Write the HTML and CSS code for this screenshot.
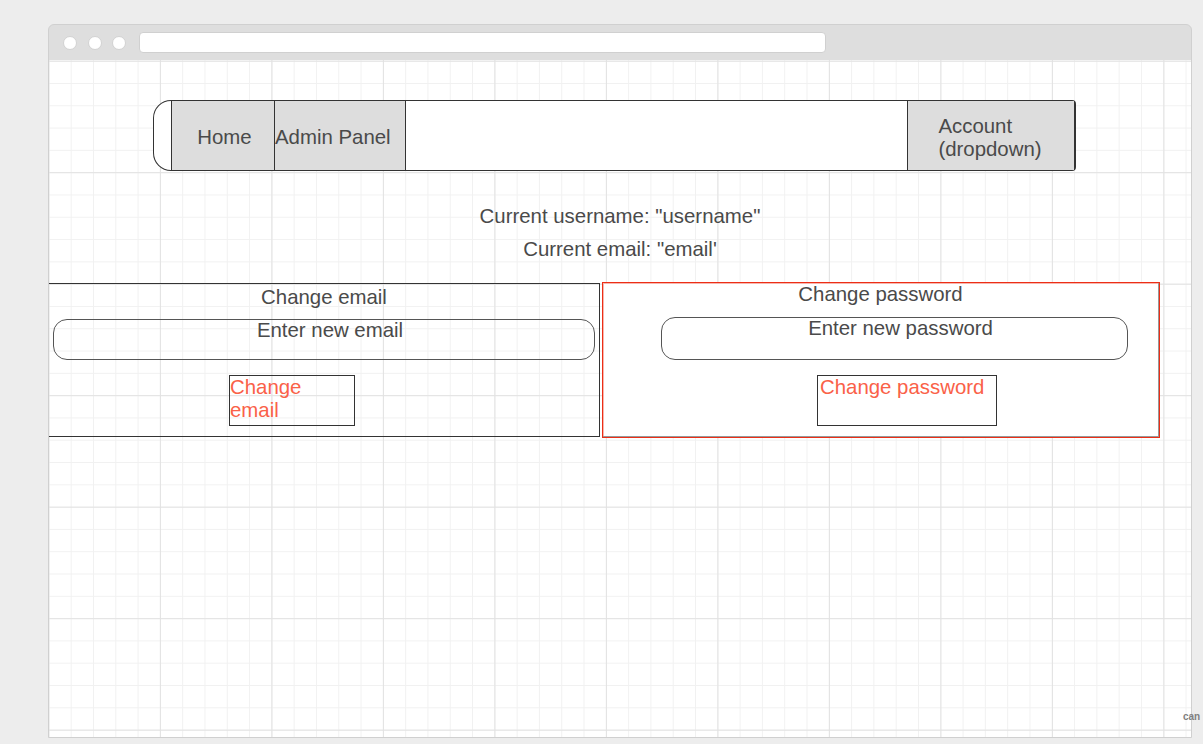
FILE: index.html
```html
<!DOCTYPE html>
<html lang="en">
<head>
    <meta charset="UTF-8">
    <meta name="viewport" content="width=device-width, initial-scale=1.0">
    <title>Account Settings Mockup</title>
    <link rel="stylesheet" href="styles.css">
</head>
<body>
    <div class="window">
        <div class="titlebar">
            <span class="dot"></span>
            <span class="dot"></span>
            <span class="dot"></span>
            <div class="address"></div>
        </div>
        <div class="canvas">
            <nav class="navbar">
                <div class="tab tabHome">Home</div>
                <div class="tab tabAdmin">Admin Panel</div>
                <div class="tab tabAccount"><span>Account<br>(dropdown)</span></div>
            </nav>

            <div class="info">
                <p>Current username: "username"</p>
                <p>Current email: "email'</p>
            </div>

            <div class="panels">
                <section class="panel panelEmail">
                    <h2>Change email</h2>
                    <div class="field">Enter new email</div>
                    <div class="btn">Change<br>email</div>
                </section>
                <div class="selection">
                    <section class="panel panelPassword">
                        <h2>Change password</h2>
                        <div class="field">Enter new password</div>
                        <div class="btn">Change password</div>
                    </section>
                </div>
            </div>
        </div>
    </div>
    <div class="watermark">can</div>
</body>
</html>
```

FILE: styles.css
```css
* {
    box-sizing: border-box;
}
html {
    overflow: hidden;
}
body {
    position: relative;
    width: 1203px;
    height: 744px;
    margin: 0;
    padding: 24px 0 0 48px;
    overflow: hidden;
    background: #ededed;
    font-family: 'Liberation Sans', Arial, sans-serif;
    font-size: 20.4px;
    color: #4a4a4a;
}
.window {
    width: 1144px;
    border: 1px solid #d0d0d0;
    border-radius: 6px 6px 0 0;
    background: #dedede;
}
.titlebar {
    height: 35px;
    display: flex;
    align-items: center;
    padding-left: 14px;
}
.dot {
    width: 14px;
    height: 14px;
    margin-right: 10.5px;
    border-radius: 50%;
    background: #fff;
    border: 1px solid #d2d2d2;
}
.address {
    width: 687px;
    height: 21px;
    margin-left: 2px;
    background: #fff;
    border: 1px solid #d0d0d0;
    border-radius: 4px;
}
.canvas {
    height: 677px;
    overflow: hidden;
    background-color: #fff;
    background-image:
        linear-gradient(to right, #e2e2e2 1px, transparent 1px),
        linear-gradient(to bottom, #e2e2e2 1px, transparent 1px),
        linear-gradient(to right, #f1f1f1 1px, transparent 1px),
        linear-gradient(to bottom, #f1f1f1 1px, transparent 1px);
    background-size: 111.5px 111.5px, 111.5px 111.5px, 22.3px 22.3px, 22.3px 22.3px;
    background-position: -0.6px 0.7px;
}

/* nav mockup */
.navbar {
    display: flex;
    width: 923px;
    height: 71px;
    margin: 40px 0 0 104px;
    border: 1px solid #333;
    border-right-width: 2px;
    border-radius: 18px 4px 4px 18px;
    background: #fff;
}
.tab {
    display: flex;
    align-items: center;
    justify-content: center;
    height: 100%;
    padding-top: 4px;
    background: #dddddd;
    border-left: 1px solid #333;
    line-height: 23px;
}
.tabHome {
    width: 103px;
    margin-left: 17px;
    padding-left: 3px;
}
.tabAdmin {
    width: 132px;
    justify-content: flex-start;
    border-right: 1px solid #333;
}
.tabAccount {
    width: 167px;
    margin-left: auto;
    padding-right: 2px;
}
.tabAccount span {
    text-align: left;
}

.info {
    margin-top: 29px;
    text-align: center;
    line-height: 33px;
}
.info p {
    margin: 0;
}

/* the two form boxes */
.panels {
    display: flex;
    align-items: flex-start;
    gap: 2px;
    margin-top: 17px;
    margin-left: -1px;
}
.panel {
    border: 1px solid #333;
}
.panel h2 {
    margin: 0;
    font-size: 20.4px;
    font-weight: normal;
    text-align: center;
}
.field {
    border: 1px solid #555;
    border-radius: 14px;
    text-align: center;
    line-height: 20px;
}
.btn {
    border: 1px solid #333;
    color: #fa6148;
}
.panelEmail {
    width: 552px;
    height: 154px;
}
.panelEmail h2 {
    padding-top: 2px;
    line-height: 23px;
}
.panelEmail .field {
    height: 41px;
    margin: 10px 4px 0 4px;
    padding-left: 12px;
}
.panelEmail .btn {
    width: 126px;
    height: 51px;
    margin: 15px 0 0 180px;
    line-height: 23px;
}

/* red selection frame round the password box */
.selection {
    margin-top: -1px;
    border: 1px solid #ec2e16;
    box-shadow: inset 0 0 0 1px rgba(236, 46, 22, 0.35);
    background: #fff;
}
.panel.panelPassword {
    width: 556px;
    height: 154px;
    border-width: 0 1px 1px 0;
    border-color: #999;
}
.panelPassword h2 {
    padding-top: 1px;
    line-height: 21px;
}
.panelPassword .field {
    width: 467px;
    height: 43px;
    margin: 12px 0 0 58px;
    padding-left: 12px;
}
.panelPassword .btn {
    width: 180px;
    height: 51px;
    margin: 15px 0 0 214px;
    padding-left: 2px;
    line-height: 22px;
}

.watermark {
    position: absolute;
    left: 1183px;
    top: 711px;
    font-size: 10px;
    font-weight: bold;
    color: #808080;
    white-space: nowrap;
}
```
